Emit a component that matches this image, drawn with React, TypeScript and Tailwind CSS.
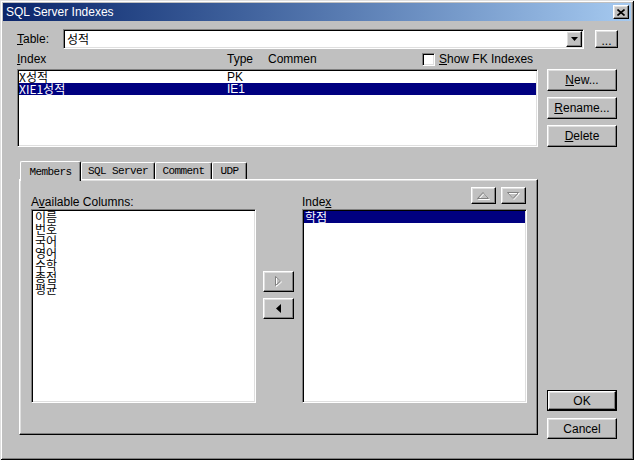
import React from 'react';

const raised =
  'border border-t-white border-l-white border-r-black border-b-black shadow-[inset_-1px_-1px_0_#808080,inset_1px_1px_0_#dfdfdf] bg-[#c0c0c0]';
const sunken =
  'border border-t-[#808080] border-l-[#808080] border-r-white border-b-white shadow-[inset_1px_1px_0_#000,inset_-1px_-1px_0_#dfdfdf] bg-white p-px';
const kr = "font-['Noto_Sans_CJK_KR',sans-serif]";

const columns = ['이름', '번호', '국어', '영어', '수학', '총점', '평균'];

const tabs = [
  { label: 'Members', w: 'w-[61px]', active: true },
  { label: 'SQL Server', w: 'w-[74px]', active: false },
  { label: 'Comment', w: 'w-[57px]', active: false },
  { label: 'UDP', w: 'w-[35px]', active: false },
];

function Btn({ children, className = '' }: { children?: React.ReactNode; className?: string }) {
  return <div className={`${raised} flex items-center justify-center ${className}`}>{children}</div>;
}

// disabled arrow: grey outline with a white shadow
function Emboss({ points, w, h }: { points: string; w: number; h: number }) {
  return (
    <svg width={w + 1} height={h + 1} viewBox={`0 0 ${w + 1} ${h + 1}`}>
      <polygon points={points} transform="translate(1 1)" fill="none" stroke="#fff" strokeWidth="1" />
      <polygon points={points} fill="none" stroke="#808080" strokeWidth="1" />
    </svg>
  );
}

export default function App() {
  return (
    <div className="w-[634px] h-[460px] bg-[#c0c0c0] p-[3px] shadow-[inset_1px_1px_0_#dfdfdf,inset_-1px_-1px_0_#000,inset_2px_2px_0_#fff,inset_-2px_-2px_0_#808080] font-['Liberation_Sans','Noto_Sans_CJK_KR',sans-serif] text-[12px] leading-none text-black flex flex-col">
      {/* title bar */}
      <div className="h-[18px] flex items-center justify-between bg-linear-to-r from-[#0a246a] to-[#a6caf0] pl-[3px] pr-[2px]">
        <span className="text-white">SQL Server Indexes</span>
        <Btn className="w-[16px] h-[14px]">
          <svg width="8" height="7" viewBox="0 0 8 7">
            <path d="M0.5 0.5L7.5 6.5M7.5 0.5L0.5 6.5" stroke="#000" strokeWidth="1.6" />
          </svg>
        </Btn>
      </div>

      <div className="flex flex-col pl-[14px]">
        {/* table selector */}
        <div className="flex items-center mt-[8px] h-[20px]">
          <span className="w-[46px]">
            <u>T</u>able:
          </span>
          <div className={`${sunken} w-[521px] h-[20px] flex items-center`}>
            <span className={`flex-1 pl-[2px] ${kr}`}>성적</span>
            <Btn className="w-[16px] h-[16px]">
              <svg width="7" height="4" viewBox="0 0 7 4">
                <path d="M0 0h7L3.5 4z" fill="#000" />
              </svg>
            </Btn>
          </div>
          <Btn className="ml-[11px] w-[23px] h-[18px]">
            <span className="pt-[3px]">...</span>
          </Btn>
        </div>

        {/* index list */}
        <div className="flex">
          <div className="flex flex-col w-[521px]">
            <div className="h-[20px] flex items-center">
              <span className="w-[210px]">
                <u>I</u>ndex
              </span>
              <span className="w-[41px]">Type</span>
              <span className="w-[49px] overflow-hidden whitespace-nowrap">Comment</span>
              <div className="ml-[105px] flex items-center gap-[4px]">
                <div className={`${sunken} w-[13px] h-[13px]`} />
                <span>
                  <u>S</u>how FK Indexes
                </span>
              </div>
            </div>
            <div className={`${sunken} h-[78px] flex flex-col`}>
              <div className="flex h-[12px] items-center">
                <span className={`w-[208px] ${kr}`}>X성적</span>
                <span>PK</span>
              </div>
              <div className="flex h-[12px] items-center bg-[#000080] text-white">
                <span className={`w-[208px] ${kr}`}>XIE1성적</span>
                <span>IE1</span>
              </div>
            </div>
          </div>
          <div className="flex flex-col gap-[6px] ml-[9px] mt-[20px]">
            <Btn className="w-[70px] h-[22px]">
              <span>
                <u>N</u>ew...
              </span>
            </Btn>
            <Btn className="w-[70px] h-[22px]">
              <span>
                <u>R</u>ename...
              </span>
            </Btn>
            <Btn className="w-[70px] h-[22px]">
              <span>
                <u>D</u>elete
              </span>
            </Btn>
          </div>
        </div>

        {/* tab control + dialog buttons */}
        <div className="flex mt-[14px] ml-[2px]">
          <div className="flex flex-col">
            <div className="flex items-end pl-[1px] h-[18px] font-['Liberation_Mono',monospace] text-[11px] tracking-[-0.6px]">
              {tabs.map((t) => (
                <div
                  key={t.label}
                  className={`${t.w} ${
                    t.active ? 'h-[20px] mb-[-2px] relative z-10' : 'h-[17px]'
                  } bg-[#c0c0c0] border-t border-l border-r border-t-white border-l-white border-r-black rounded-t-[2px] shadow-[inset_-1px_0_0_#808080] flex items-center justify-center pt-px`}
                >
                  {t.label}
                </div>
              ))}
            </div>
            <div className="w-[519px] h-[256px] border border-t-white border-l-white border-r-black border-b-black shadow-[inset_-1px_-1px_0_#808080,inset_1px_1px_0_#dfdfdf] flex pl-[11px] pt-[7px]">
              <div className="flex flex-col w-[225px]">
                <div className="h-[22px] flex items-end pb-[1px]">
                  <span>
                    A<u>v</u>ailable Columns:
                  </span>
                </div>
                <div className={`${sunken} h-[194px] flex flex-col ${kr} leading-[12px]`}>
                  {columns.map((c) => (
                    <div key={c} className="h-[12px] pl-[2px]">
                      {c}
                    </div>
                  ))}
                </div>
              </div>

              <div className="flex flex-col gap-[6px] ml-[7px] mt-[84px] w-[31px]">
                <Btn className="w-[31px] h-[21px]">
                  <Emboss points="0.5,0.5 5.5,5 0.5,9.5" w={6} h={10} />
                </Btn>
                <Btn className="w-[31px] h-[21px]">
                  <svg width="5" height="9" viewBox="0 0 5 9">
                    <path d="M5 0v9L0 4.5z" fill="#000" />
                  </svg>
                </Btn>
              </div>

              <div className="flex flex-col w-[225px] ml-[8px]">
                <div className="h-[22px] flex justify-between">
                  <span className="self-end pb-[1px]">
                    Inde<u>x</u>
                  </span>
                  <div className="flex gap-[5px] pr-[1px] self-start">
                    <Btn className="w-[25px] h-[17px]">
                      <Emboss points="0.5,6.5 11.5,6.5 6,0.5" w={12} h={7} />
                    </Btn>
                    <Btn className="w-[25px] h-[17px]">
                      <Emboss points="0.5,0.5 11.5,0.5 6,6.5" w={12} h={7} />
                    </Btn>
                  </div>
                </div>
                <div className={`${sunken} h-[194px] flex flex-col ${kr} leading-[12px]`}>
                  <div className="h-[12px] bg-[#000080] text-white pl-px">학점</div>
                </div>
              </div>
            </div>
          </div>

          <div className="flex flex-col gap-[7px] ml-[9px] mt-[229px]">
            <div className="border border-black w-[70px] h-[21px] flex">
              <Btn className="flex-1">OK</Btn>
            </div>
            <Btn className="w-[70px] h-[21px]">Cancel</Btn>
          </div>
        </div>
      </div>
    </div>
  );
}
